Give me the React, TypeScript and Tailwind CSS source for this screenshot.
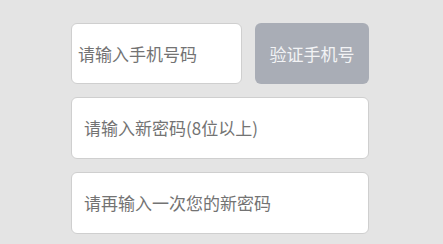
export default function App() {
  return (
    <div
      className="min-h-[244px] w-full bg-[#e4e4e4] pl-[71px] pt-[23px]"
      style={{ fontFamily: '"Noto Sans CJK SC", "Liberation Sans", sans-serif' }}
    >
      <div className="flex w-[298px] flex-col gap-[13px]">
        <div className="flex gap-[13px]">
          <div className="flex h-[61px] w-[171px] items-center rounded-[6px] border border-[#cfcfcf] bg-white pl-[6px] text-[17px] text-[#737373]">
            请输入手机号码
          </div>
          <button className="flex h-[61px] flex-1 items-center justify-center rounded-[6px] bg-[#a9adb6] text-[17px] text-[#f2f3f5]">
            验证手机号
          </button>
        </div>
        <div className="flex h-[62px] items-center rounded-[6px] border border-[#cfcfcf] bg-white pl-[12px] text-[17px] text-[#737373]">
          请输入新密码(8位以上)
        </div>
        <div className="flex h-[62px] items-center rounded-[6px] border border-[#cfcfcf] bg-white pl-[12px] text-[17px] text-[#737373]">
          请再输入一次您的新密码
        </div>
      </div>
    </div>
  );
}
